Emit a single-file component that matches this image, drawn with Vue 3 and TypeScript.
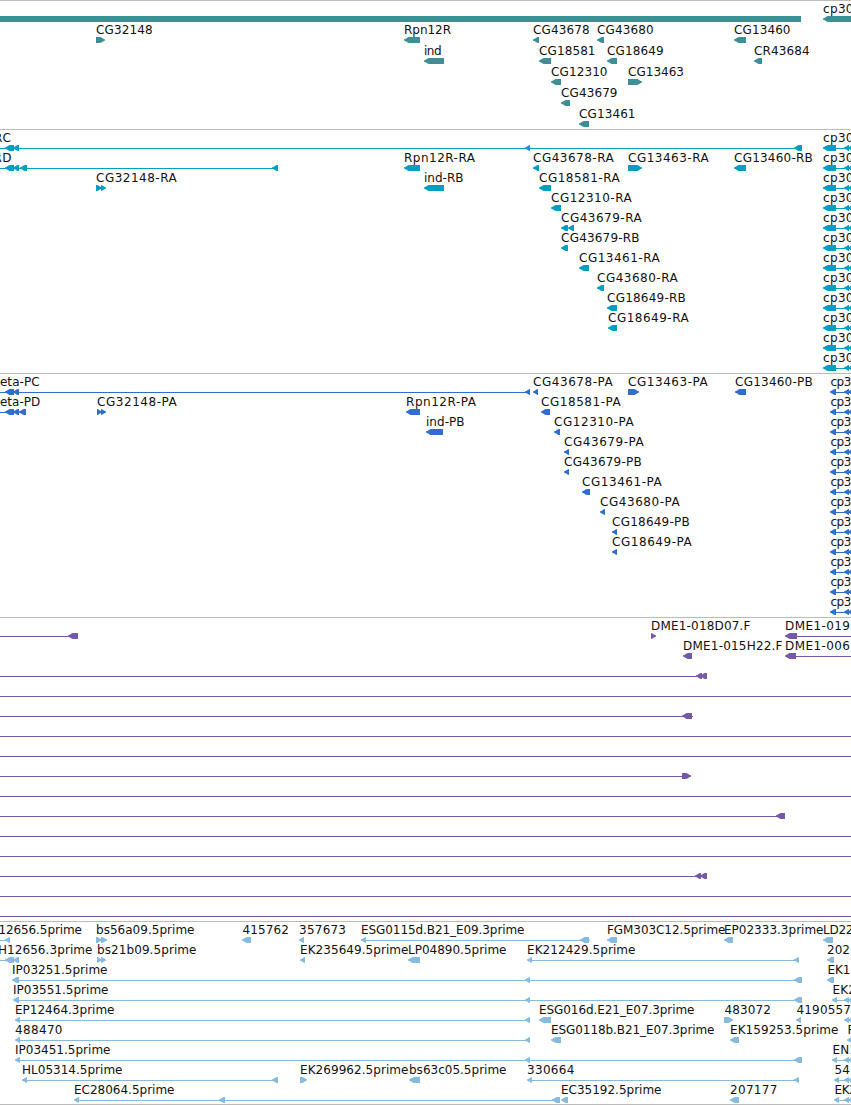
<script setup lang="ts">
type Label = [text: string, row: number, start: number, end: number]

interface Track {
  id: string
  height: number
  pitch: number
  labels: Label[]
  // One entry per row. "=a:b" intron line, "#a:b" block, "<a:b" reverse exon, ">a:b" forward exon
  rows: string[]
}

interface Shape {
  key: string
  points: string
}

const repeatLabel = (text: string, count: number, start: number, end: number): Label[] =>
  Array.from({ length: count }, (_, row): Label => [text, row, start, end])

const cpRna = ' <823:836 =836:851 <844:849 <848:855'
const cpCds = ' <830:836 =836:851 <844:849 <848:855'

const tracks: Track[] = [
  {
    id: 'gene', height: 129, pitch: 21,
    labels: [
      ['cp30', 0, 823.7, 853.5], ['CG32148', 1, 96.7, 152.7], ['Rpn12R', 1, 404.6, 451],
      ['CG43678', 1, 533.7, 589.7], ['CG43680', 1, 597.7, 653.7], ['CG13460', 1, 734.7, 790.5],
      ['ind', 2, 424.6, 441.5], ['CG18581', 2, 539.7, 595.5], ['CG18649', 2, 607.7, 663.7],
      ['CR43684', 2, 754.7, 809.7], ['CG12310', 3, 551.7, 607.5], ['CG13463', 3, 628.7, 684],
      ['CG43679', 4, 561.7, 617.5], ['CG13461', 5, 579.7, 635.5],
    ],
    rows: [
      '#0:801 <823:856',
      '>96:105 <404:420 <533:539 <597:604 <734:746',
      '<424:444 <539:551 <607:617 <754:762',
      '<551:561 >628:642',
      '<561:570',
      '<579:589',
    ],
  },
  {
    id: 'transcript', height: 244, pitch: 20,
    labels: [
      ['RC', 0, -5.5, 11], ['RD', 1, -5.8, 11.4], ['Rpn12R-RA', 1, 404.6, 475],
      ['CG43678-RA', 1, 533.7, 613.7], ['CG13463-RA', 1, 628.7, 708.7], ['CG13460-RB', 1, 734.7, 812.7],
      ['CG32148-RA', 2, 96.7, 176.7], ['ind-RB', 2, 424.6, 463.5], ['CG18581-RA', 2, 539.7, 619.7],
      ['CG12310-RA', 3, 551.7, 631.7], ['CG43679-RA', 4, 561.7, 641.7], ['CG43679-RB', 5, 561.7, 639.5],
      ['CG13461-RA', 6, 579.7, 659.7], ['CG43680-RA', 7, 597.7, 677.7], ['CG18649-RB', 8, 607.7, 685.7],
      ['CG18649-RA', 9, 608.7, 688.7],
      ...repeatLabel('cp30', 12, 823.7, 853.5),
    ],
    rows: [
      '=0:801 <5:14 <13:19 <525:530 <794:802',
      '=0:277 <5:14 <13:19 <20:27 <272:278 <404:420 <533:539 >628:642 <734:746',
      '>96:102 >101:106 <424:444 <539:551',
      '<551:561', '<561:568 <568:574', '<561:568', '<579:589', '<597:604', '<607:617', '<608:617', '', '',
    ].map((row) => row + cpRna),
  },
  {
    id: 'cds', height: 244, pitch: 20,
    labels: [
      ['eta-PC', 0, 0.5, 39.7], ['CG43678-PA', 0, 533.7, 612.7], ['CG13463-PA', 0, 628.7, 707.7],
      ['CG13460-PB', 0, 735.7, 812.7], ['eta-PD', 1, 0.5, 40.3], ['CG32148-PA', 1, 97.7, 176.7],
      ['Rpn12R-PA', 1, 406.6, 476], ['CG18581-PA', 1, 541.7, 620.7], ['ind-PB', 2, 426.6, 464.5],
      ['CG12310-PA', 2, 554.7, 633.7], ['CG43679-PA', 3, 564.7, 643.7], ['CG43679-PB', 4, 564.7, 641.7],
      ['CG13461-PA', 5, 582.7, 661.7], ['CG43680-PA', 6, 600.7, 679.7], ['CG18649-PB', 7, 612.7, 689.7],
      ['CG18649-PA', 8, 612.7, 691.7],
      ...repeatLabel('cp3', 12, 831, 851.5),
    ],
    rows: [
      '=0:527 <5:14 <13:19 <525:530 <533:538 >628:639 <735:746',
      '=0:20 <5:14 <13:19 <19:26 >97:102 >101:106 <406:420 <541:550',
      '<426:443 <554:560',
      '<564:569', '<564:569', '<582:590', '<600:605', '<612:617', '<612:617', '', '', '',
    ].map((row) => row + cpCds),
  },
  {
    id: 'bac', height: 304, pitch: 20,
    labels: [
      ['DME1-018D07.F', 0, 651.6, 750.5], ['DME1-019', 0, 785.6, 850],
      ['DME1-015H22.F', 1, 683.6, 782.5], ['DME1-006', 1, 785.6, 850],
    ],
    rows: [
      '=0:70 <68:78 >651:656 <785:797 =797:851',
      '<683:692 <785:796 =796:851',
      '=0:700 <696:702 <700:707',
      '=0:851',
      '=0:693 <682:692',
      '=0:851', '=0:851',
      '=0:684 >682:691',
      '=0:851',
      '=0:779 <776:785',
      '=0:851', '=0:851',
      '=0:700 <695:701 <700:707',
      '=0:851', '=0:851',
    ],
  },
  {
    id: 'est', height: 183, pitch: 20,
    labels: [
      ['12656.5prime', 0, -1, 82], ['bs56a09.5prime', 0, 96.6, 194.5], ['415762', 0, 243, 289],
      ['357673', 0, 299.7, 346], ['ESG0115d.B21_E09.3prime', 0, 361.6, 524.5],
      ['FGM303C12.5prime', 0, 607.6, 725.5], ['EP02333.3prime', 0, 724.6, 823.5], ['LD22', 0, 823.6, 853.5],
      ['H12656.3prime', 1, -1.5, 92.5], ['bs21b09.5prime', 1, 97.6, 196.5], ['EK235649.5prime', 1, 300.6, 408.5],
      ['LP04890.5prime', 1, 408.6, 506.5], ['EK212429.5prime', 1, 527.6, 635.5], ['202', 1, 827.7, 850],
      ['IP03251.5prime', 2, 12.6, 107.5], ['EK1', 2, 828, 850.5],
      ['IP03551.5prime', 3, 13.6, 108.5], ['EK2', 3, 833, 856],
      ['EP12464.3prime', 4, 15.6, 114.5], ['ESG016d.E21_E07.3prime', 4, 539.6, 694.5],
      ['483072', 4, 725, 771], ['4190557', 4, 797, 851],
      ['488470', 5, 15.7, 62.5], ['ESG0118b.B21_E07.3prime', 5, 551.6, 714.5],
      ['EK159253.5prime', 5, 730.6, 838.5], ['F', 5, 848, 854],
      ['IP03451.5prime', 6, 15.6, 110.5], ['EN1', 6, 833, 857],
      ['HL05314.5prime', 7, 22.6, 122.5], ['EK269962.5prime', 7, 300.6, 408.5],
      ['bs63c05.5prime', 7, 409.6, 506.5], ['330664', 7, 527.7, 574.3], ['54', 7, 835, 850],
      ['EC28064.5prime', 8, 74.6, 174.5], ['EC35192.5prime', 8, 561.6, 661.5],
      ['207177', 8, 730.7, 777.3], ['EK2', 8, 835, 857],
    ],
    rows: [
      '=0:6 <5:10 >96:102 >101:107 <242:251 <299:304 =366:590 <361:366 <580:589 <607:617 <724:733 <823:833',
      '=0:6 <5:14 <13:19 >97:102 >101:106 <300:305 <408:420 =531:796 <527:532 <794:799 <827:834',
      '<12:19 =19:797 <525:530 <794:802 <827:834',
      '<13:19 =19:797 <525:530 <794:802 <832:837 =837:851 <844:849 <848:855',
      '<15:20 =20:527 <525:530 <539:551 >724:733 <796:801 <844:849 <848:855',
      '<15:20 =20:527 <525:530 <551:561 <730:739 <847:855',
      '<15:20 =20:797 <525:530 <794:802 <832:837 =837:851 <844:849 <848:855',
      '<22:27 =27:274 <272:278 >300:307 <409:420 <527:532 =532:796 <794:799 <834:839 =839:851 <844:849 <848:855',
      '<74:79 =79:555 <219:225 <552:560 <561:568 <730:739 <834:839 =839:851 <844:849 <848:855',
    ],
  },
]

function polygonOf(points: number[][]): string {
  return points.map((point) => point.join(',')).join(' ')
}

function outline(kind: string, a: number, b: number, top: number): string {
  const bottom = top + 6
  const mid = top + 3
  if (kind === '=') return polygonOf([[a, mid], [b, mid], [b, mid + 1], [a, mid + 1]])
  if (kind === '#') return polygonOf([[a, top], [b, top], [b, bottom], [a, bottom]])
  const tip = kind === '<' ? a : b
  const tail = kind === '<' ? b : a
  const dir = kind === '<' ? 1 : -1
  return polygonOf([
    [tip, mid - 0.4], [tip + 2 * dir, mid - 1.6], [tip + 4 * dir, top + 0.3], [tip + 5 * dir, top],
    [tail, top], [tail, bottom],
    [tip + 5 * dir, bottom], [tip + 4 * dir, bottom - 0.3], [tip + 2 * dir, mid + 1.6], [tip, mid + 0.4],
  ])
}

function shapes(track: Track): Shape[] {
  return track.rows.flatMap((row, r) =>
    row.split(' ').filter(Boolean).map((token, i) => {
      const [a, b] = token.slice(1).split(':').map(Number)
      return { key: `${r}-${i}`, points: outline(token.charAt(0), a, b, 16 + r * track.pitch) }
    }),
  )
}
</script>

<template>
  <main class="browser">
    <section v-for="track in tracks" :key="track.id" class="track" :class="track.id">
      <svg class="canvas" width="851" :height="track.height - 1" :viewBox="`0 1 851 ${track.height - 1}`">
        <polygon v-for="shape in shapes(track)" :key="shape.key" :points="shape.points" />
        <text
          v-for="([text, row, start, end], i) in track.labels"
          :key="i"
          :x="start - 0.6"
          :y="13 + row * track.pitch"
          :textLength="end - start + 0.6"
          lengthAdjust="spacing"
        >{{ text }}</text>
      </svg>
    </section>
  </main>
</template>

<style>
body {
  margin: 0;
  background: #fff;
}
</style>

<style scoped>
.browser {
  width: 851px;
  height: 1105px;
  box-sizing: border-box;
  overflow: hidden;
  background: #fff;
  font-family: "DejaVu Sans", sans-serif;
  font-size: 12px;
}

.track {
  border-top: 1px solid #bbb;
}

.track:last-child {
  border-bottom: 1px solid #bbb;
}

.canvas {
  display: block;
  overflow: hidden;
}

.gene { color: #3f8e96; }
.transcript { color: #009ebf; }
.cds { color: #306dce; }
.bac { color: #7558a8; }
.est { color: #86bbdd; }

polygon {
  fill: currentColor;
}

text {
  fill: #111;
  white-space: pre;
}
</style>
